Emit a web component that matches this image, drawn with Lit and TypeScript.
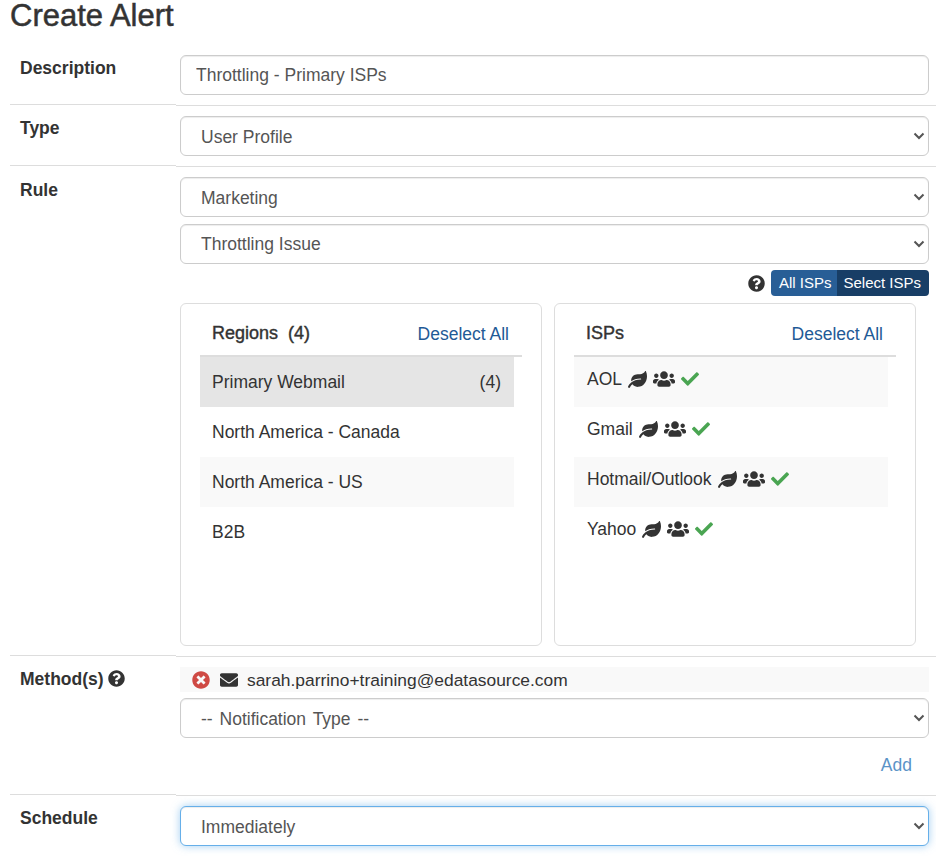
import { LitElement, html, css, svg } from "lit";
import { customElement } from "lit/decorators.js";

const ICONS = {
  check: ["0 0 512 512", "M173.898 439.404l-166.4-166.4c-9.997-9.997-9.997-26.206 0-36.204l36.203-36.204c9.997-9.998 26.207-9.998 36.204 0L192 312.69 432.095 72.596c9.997-9.997 26.207-9.997 36.204 0l36.203 36.204c9.997 9.997 9.997 26.206 0 36.204l-294.4 294.401c-9.998 9.997-26.207 9.997-36.204-.001z"],
  help: ["0 0 512 512", "M504 256c0 136.997-111.043 248-248 248S8 392.997 8 256C8 119.083 119.043 8 256 8s248 111.083 248 248zM262.655 90c-54.497 0-89.255 22.957-116.549 63.758-3.536 5.286-2.353 12.415 2.715 16.258l34.699 26.31c5.205 3.947 12.621 3.008 16.665-2.122 17.864-22.658 30.113-35.797 57.303-35.797 20.429 0 45.698 13.148 45.698 32.958 0 14.976-12.363 22.667-32.534 33.976C247.128 238.528 216 254.941 216 296v4c0 6.627 5.373 12 12 12h56c6.627 0 12-5.373 12-12v-1.333c0-28.462 83.186-29.647 83.186-106.667 0-58.002-60.165-102-116.531-102zM256 338c-25.365 0-46 20.635-46 46 0 25.364 20.635 46 46 46s46-20.636 46-46c0-25.365-20.635-46-46-46z"],
  remove: ["0 0 512 512", "M256 8C119 8 8 119 8 256s111 248 248 248 248-111 248-248S393 8 256 8zm121.6 313.1c4.7 4.7 4.7 12.3 0 17L338 377.6c-4.7 4.7-12.3 4.7-17 0L256 312l-65.1 65.6c-4.7 4.7-12.3 4.7-17 0L134.4 338c-4.7-4.7-4.7-12.3 0-17l65.6-65-65.6-65.1c-4.7-4.7-4.7-12.3 0-17l39.6-39.6c4.7-4.7 12.3-4.7 17 0l65 65.7 65.1-65.6c4.7-4.7 12.3-4.7 17 0l39.6 39.6c4.7 4.7 4.7 12.3 0 17L312 256l65.6 65.1z"],
  envelope: ["0 0 512 512", "M502.3 190.8c3.9-3.1 9.7-.2 9.7 4.7V400c0 26.5-21.5 48-48 48H48c-26.5 0-48-21.5-48-48V195.6c0-5 5.7-7.8 9.7-4.7 22.4 17.4 52.1 39.5 154.1 113.6 21.1 15.4 56.7 47.8 92.2 47.6 35.7.3 72-32.8 92.3-47.6 102-74.1 131.6-96.3 154-113.7zM256 320c23.2.4 56.6-29.2 73.4-41.4 132.7-96.3 142.8-104.7 173.4-128.7 5.8-4.5 9.2-11.5 9.2-18.9v-19c0-26.5-21.5-48-48-48H48C21.5 64 0 85.5 0 112v19c0 7.4 3.4 14.3 9.2 18.9 30.6 23.9 40.7 32.4 173.4 128.7 16.8 12.2 50.2 41.8 73.4 41.4z"],
  users: ["0 0 640 512", "M96 224c35.3 0 64-28.7 64-64s-28.7-64-64-64-64 28.7-64 64 28.7 64 64 64zm448 0c35.3 0 64-28.7 64-64s-28.7-64-64-64-64 28.7-64 64 28.7 64 64 64zm32 32h-64c-17.6 0-33.5 7.1-45.1 18.6 40.3 22.1 68.9 62 75.1 109.4h66c17.7 0 32-14.3 32-32v-32c0-35.3-28.7-64-64-64zm-256 0c61.9 0 112-50.1 112-112S381.9 32 320 32 208 82.1 208 144s50.1 112 112 112zm76.8 32h-8.3c-20.8 10-43.9 16-68.5 16s-47.6-6-68.5-16h-8.3C179.6 288 128 339.6 128 403.2V432c0 26.5 21.5 48 48 48h288c26.5 0 48-21.5 48-48v-28.8c0-63.6-51.6-115.2-115.2-115.2zm-223.7-13.4C161.5 263.1 145.6 256 128 256H64c-35.3 0-64 28.7-64 64v32c0 17.7 14.3 32 32 32h65.9c6.3-47.4 34.9-87.3 75.2-109.4z"],
  leaf: ["0 0 576 512", "M546.2 9.7c-5.6-12.5-21.6-13-28.3-1.2C486.9 62.4 431.4 96 368 96h-80C182 96 96 182 96 288c0 7 .8 13.7 1.5 20.5C161.3 262.8 253.4 224 384 224c8.8 0 16 7.2 16 16s-7.2 16-16 16C132.6 256 26 410.1 2.4 468c-6.6 16.3 1.2 34.9 17.5 41.6 16.4 6.8 35-1.1 41.8-17.3 1.5-3.6 20.9-47.9 71.9-90.6 32.4 43.9 94 85.8 174.9 77.2C465.5 467.5 576 326.7 576 154.3c0-50.2-10.8-102.2-29.8-144.6z"],
} as const;

const icon = (name: keyof typeof ICONS, cls = "") => {
  const [box, d] = ICONS[name];
  return html`<svg class="icon ${cls}" viewBox=${box} aria-hidden="true">${svg`<path fill="currentColor" d=${d}></path>`}</svg>`;
};

const REGIONS = [
  { name: "Primary Webmail", count: 4, active: true },
  { name: "North America - Canada" },
  { name: "North America - US" },
  { name: "B2B" },
];

const ISPS = ["AOL", "Gmail", "Hotmail/Outlook", "Yahoo"];

@customElement("app-root")
export class AppRoot extends LitElement {
  static styles = css`
    :host {
      display: block;
      height: 859px;
      overflow: hidden;
      background: #fff;
      color: #333;
      font-family: "Liberation Sans", Arial, sans-serif;
      font-size: 17.5px;
    }

    * {
      box-sizing: border-box;
    }

    h1 {
      margin: 0;
      height: 45px;
      padding-left: 10px;
      font-size: 31px;
      font-weight: 400;
      line-height: 32px;
      -webkit-text-stroke: 0.5px #333;
    }

    .row {
      display: grid;
      grid-template-columns: 166px 1fr;
      margin-left: 10px;
    }

    .label {
      margin-bottom: 1px;
      padding: 12px 0 0 10px;
      border-bottom: 1px solid #ddd;
      font-weight: 700;
      line-height: 22px;
    }

    .label.tight {
      padding-top: 11px;
    }

    .label.plain {
      border-bottom-color: transparent;
    }

    .label .icon {
      width: 17px;
      height: 17px;
      vertical-align: -2px;
    }

    .field {
      display: flex;
      flex-direction: column;
      padding: 10px 7px 10px 4px;
      border-bottom: 1px solid #ddd;
    }

    .field.plain {
      border-bottom-color: transparent;
    }

    .control,
    select {
      display: block;
      width: 100%;
      height: 40px;
      border: 1px solid #ccc;
      border-radius: 6px;
      background: #fff;
      box-shadow: inset 0 1px 1px rgba(0, 0, 0, 0.075);
      color: #555;
      font: inherit;
      outline: none;
    }

    .control {
      padding: 0 15px;
    }

    select {
      appearance: none;
      padding: 2px 30px 0 20px;
    }

    select.focus {
      border-color: #66afe9;
      box-shadow: inset 0 1px 1px rgba(0, 0, 0, 0.075), 0 0 8px rgba(102, 175, 233, 0.6);
    }

    select.wide {
      word-spacing: 2px;
    }

    .select {
      position: relative;
      display: block;
    }

    .select + .select {
      margin-top: 7px;
    }

    .select + .select select {
      padding-top: 0;
    }

    .chevron {
      position: absolute;
      top: 15px;
      right: 4px;
      width: 12px;
      height: 10px;
      color: #555;
      pointer-events: none;
    }

    .icon {
      display: inline-block;
      width: 1em;
      height: 1em;
      flex: none;
    }

    .toggle-line {
      display: flex;
      justify-content: flex-end;
      align-items: center;
      gap: 6px;
      margin-top: 6px;
    }

    .toggle-line > .icon {
      width: 17px;
      height: 17px;
    }

    .toggle {
      display: flex;
      height: 26px;
      overflow: hidden;
      border-radius: 4px;
      color: #fff;
      font-size: 15px;
      line-height: 26px;
    }

    .toggle span {
      padding: 0 6px 0 8px;
      background: #285e96;
    }

    .toggle span.on {
      padding: 0 8px 0 6px;
      background: #183e66;
    }

    .panels {
      display: grid;
      grid-template-columns: 362px 362px;
      gap: 12px;
      margin-top: 7px;
    }

    .panel {
      height: 343px;
      padding: 0 19px;
      border: 1px solid #ddd;
      border-radius: 6px;
    }

    .panel-head {
      display: flex;
      justify-content: space-between;
      align-items: center;
      height: 53px;
      padding: 8px 13px 0 12px;
      border-bottom: 2px solid #ddd;
    }

    .panel-head b {
      font-size: 18px;
      font-weight: 400;
      -webkit-text-stroke: 0.4px #333;
      white-space: pre;
    }

    .panel-head a {
      margin-top: 2px;
    }

    a {
      color: #1f5a96;
      text-decoration: none;
    }

    .list {
      margin: 0 8px 0 0;
      padding: 0;
      list-style: none;
    }

    .list li {
      display: flex;
      justify-content: space-between;
      align-items: center;
      height: 50px;
      padding: 0 13px 0 12px;
    }

    .list li:nth-child(odd) {
      background: #f9f9f9;
    }

    .list li.active {
      background: #e5e5e5;
    }

    .list.isps li {
      justify-content: flex-start;
      gap: 6px;
      padding: 0 0 6px 13px;
    }

    .isps .icon {
      width: 19px;
      height: 17px;
      color: #333;
    }

    .isps .icon.team {
      width: 22px;
      height: 18px;
    }

    .isps .icon.ok {
      color: #4aa552;
      width: 18px;
      height: 18px;
    }

    .method {
      display: flex;
      align-items: center;
      height: 25px;
      margin-bottom: 6px;
      padding-left: 12px;
      background: #f9f9f9;
      color: #333;
      font-size: 17.4px;
    }

    .method span {
      padding-top: 2px;
    }

    .method .icon {
      width: 18px;
      height: 18px;
    }

    .method .remove {
      color: #cf4a44;
      margin-right: 10px;
    }

    .method .mail {
      margin-right: 9px;
    }

    .add {
      align-self: flex-end;
      height: 47px;
      padding: 17px 17px 0 0;
      color: #5b93c7;
    }
  `;

  private select(value: string, cls = "") {
    return html`<label class="select">
      <select class=${cls}><option>${value}</option></select>
      <svg class="chevron" viewBox="0 0 12 10" aria-hidden="true">
        <path d="M1.5 2.5 6 7l4.5-4.5" fill="none" stroke="currentColor" stroke-width="2"></path>
      </svg>
    </label>`;
  }

  render() {
    return html`
      <h1>Create Alert</h1>

      <div class="row">
        <div class="label">Description</div>
        <div class="field"><input class="control" .value=${"Throttling - Primary ISPs"} /></div>
      </div>

      <div class="row">
        <div class="label tight">Type</div>
        <div class="field">${this.select("User Profile")}</div>
      </div>

      <div class="row">
        <div class="label">Rule</div>
        <div class="field">
          ${this.select("Marketing")} ${this.select("Throttling Issue")}
          <div class="toggle-line">
            ${icon("help")}
            <div class="toggle"><span>All ISPs</span><span class="on">Select ISPs</span></div>
          </div>
          <div class="panels">
            <section class="panel">
              <div class="panel-head"><b>Regions  (4)</b><a href="#">Deselect All</a></div>
              <ul class="list">
                ${REGIONS.map(
                  (r) => html`<li class=${r.active ? "active" : ""}>
                    <span>${r.name}</span>${r.count ? html`<span>(${r.count})</span>` : ""}
                  </li>`
                )}
              </ul>
            </section>
            <section class="panel">
              <div class="panel-head"><b>ISPs</b><a href="#">Deselect All</a></div>
              <ul class="list isps">
                ${ISPS.map(
                  (name) => html`<li>
                    <span>${name}</span>${icon("leaf")}${icon("users", "team")}${icon("check", "ok")}
                  </li>`
                )}
              </ul>
            </section>
          </div>
        </div>
      </div>

      <div class="row">
        <div class="label tight">Method(s) ${icon("help")}</div>
        <div class="field">
          <div class="method">
            ${icon("remove", "remove")}${icon("envelope", "mail")}
            <span>sarah.parrino+training@edatasource.com</span>
          </div>
          ${this.select("-- Notification Type --", "wide")}
          <a class="add" href="#">Add</a>
        </div>
      </div>

      <div class="row">
        <div class="label tight plain">Schedule</div>
        <div class="field plain">${this.select("Immediately", "focus")}</div>
      </div>
    `;
  }
}
